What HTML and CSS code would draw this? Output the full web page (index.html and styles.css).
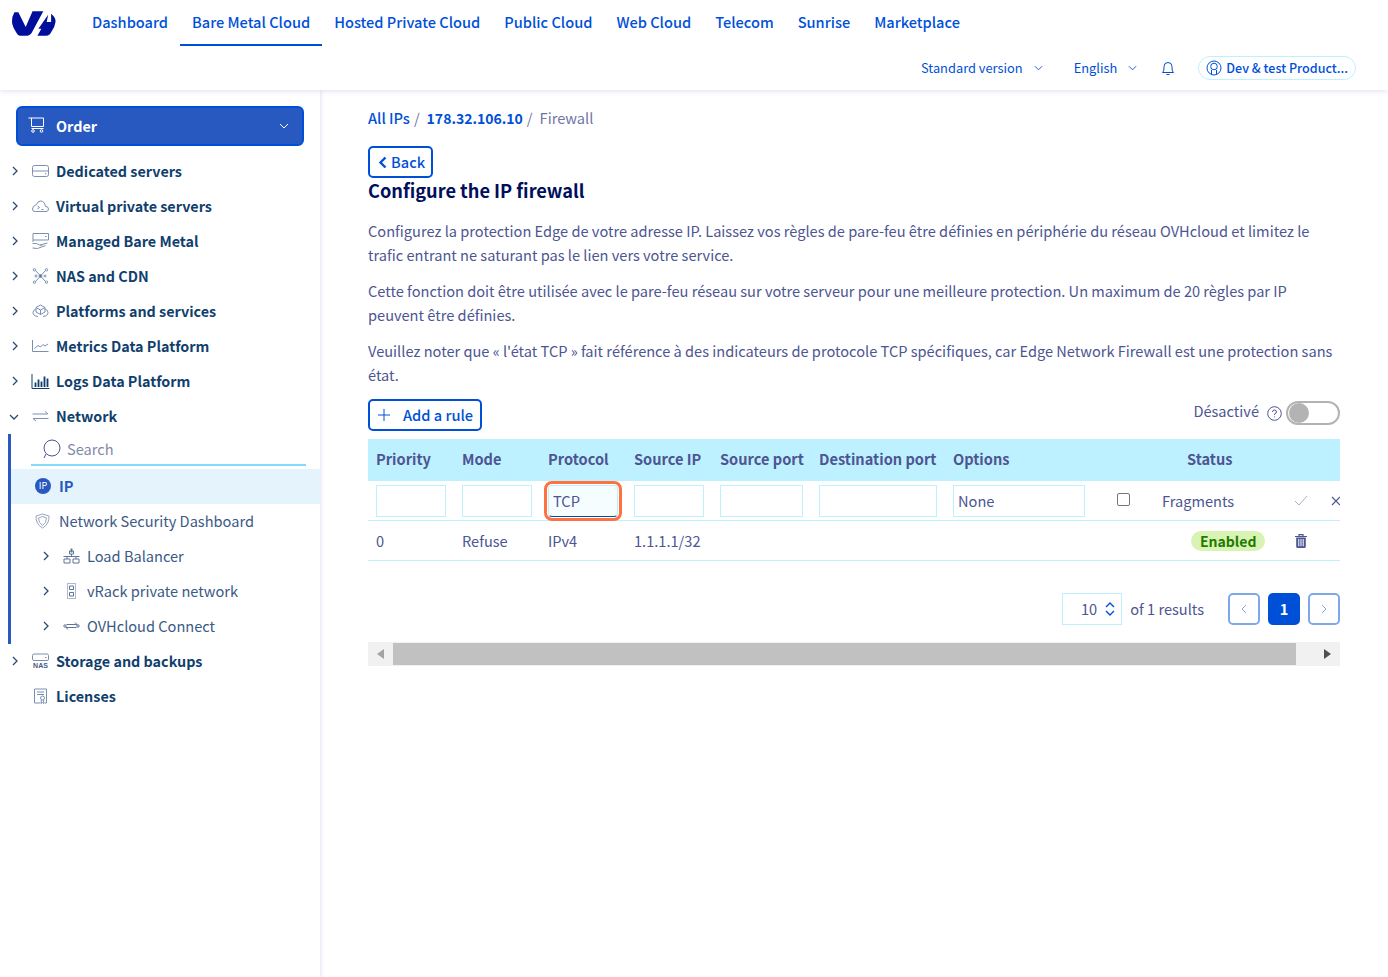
FILE: index.html
```html
<!DOCTYPE html>
<html lang="en">
<head>
  <meta charset="UTF-8" />
  <title>Configure the IP firewall</title>
  <link rel="stylesheet" href="styles.css">
</head>
<body>
  <header class="topbar">
    <div class="topbar-row">
      <svg class="logo" viewBox="0 0 45 26" width="44" height="26">
        <path d="M2.5 2H6.5L14 17L21 1H32L21 21.5Q19 26 15 26H8Q6 26 4.5 23Q0 16 0 11.5Q0 6 2.5 2Z"/>
        <path d="M40 3.500Q45 7.500 44.500 12Q44 17 40 22.500Q38.500 26 35 26H26L30 19H27L37 4.500L35.500 12H40Z"/>
      </svg>
      <nav class="main-nav">
        <a href="#">Dashboard</a>
        <a href="#" class="active">Bare Metal Cloud</a>
        <a href="#">Hosted Private Cloud</a>
        <a href="#">Public Cloud</a>
        <a href="#">Web Cloud</a>
        <a href="#">Telecom</a>
        <a href="#">Sunrise</a>
        <a href="#">Marketplace</a>
      </nav>
    </div>
    <div class="topbar-tools">
      <a href="#" class="tool version">Standard version <svg class="chev-small" viewBox="0 0 10 6"><path d="M1 1l4 4 4-4"/></svg></a>
      <a href="#" class="tool lang">English <svg class="chev-small" viewBox="0 0 10 6"><path d="M1 1l4 4 4-4"/></svg></a>
      <svg class="bell" viewBox="0 0 14 15"><path d="M1.5 11.500Q3 10.500 3 7V5.500a4 4 0 0 1 8 0V7q0 3.500 1.500 4.500ZM5.500 13.500h3"/></svg>
      <a href="#" class="user-pill">
        <svg class="user-icon" viewBox="0 0 16 16"><circle cx="8" cy="8" r="7"/><circle cx="8" cy="6.500" r="3.300"/><path d="M5.500 14.500V10M10.500 14.500V10"/></svg>
        Dev &amp; test Product...
      </a>
    </div>
  </header>

  <div class="layout">
    <aside class="sidebar">
      <button class="order-btn">
        <svg class="cart" viewBox="0 0 17 16"><path d="M.5 1H15.500V9.500H3.500V1M3.500 11.500H15.500"/><circle cx="5" cy="14" r="1.300"/><circle cx="13.500" cy="14" r="1.300"/></svg>
        <span>Order</span>
        <svg class="chev-order" viewBox="0 0 10 6"><path d="M1 1l4 4 4-4"/></svg>
      </button>

      <ul class="side-list">
        <li class="side-item">
          <svg class="caret" viewBox="0 0 6 10"><path d="M1 1l4 4-4 4"/></svg>
          <svg class="side-icon" viewBox="0 0 17 12"><rect x=".5" y=".5" width="16" height="11" rx="2"/><path d="M.5 6h16M13 8.800h1.500"/></svg>
          Dedicated servers
        </li>
        <li class="side-item">
          <svg class="caret" viewBox="0 0 6 10"><path d="M1 1l4 4-4 4"/></svg>
          <svg class="side-icon" viewBox="0 0 17 12"><path d="M3.500 11.500H14Q16.500 11.500 16.500 9T13.500 6.500Q12.500 1 8.500 1 5.500 1 4.500 4.500 .5 6 .5 9t3 2.500ZM5.500 6l2 1.500-2 1.500M9.500 9.500h2"/></svg>
          Virtual private servers
        </li>
        <li class="side-item">
          <svg class="caret" viewBox="0 0 6 10"><path d="M1 1l4 4-4 4"/></svg>
          <svg class="side-icon tall" viewBox="0 0 17 16"><path d="M1 9V.5H16.500V7H1M13 3.500h1.500M.5 10.500h4l3 1.500h3M.5 15l5 .5 8-3M8 12l7.500-2"/></svg>
          Managed Bare Metal
        </li>
        <li class="side-item">
          <svg class="caret" viewBox="0 0 6 10"><path d="M1 1l4 4-4 4"/></svg>
          <svg class="side-icon tall" viewBox="0 0 16 16"><path d="M3 2.500L13 13.500M13 2.500L3 13.500"/><circle cx="2" cy="1.800" r="1.200"/><circle cx="14" cy="1.800" r="1.200"/><circle cx="2" cy="14.200" r="1.200"/><circle cx="14" cy="14.200" r="1.200"/><circle cx="3.500" cy="8" r="1"/><circle cx="12.500" cy="8" r="1"/><circle class="node" cx="8" cy="8" r="1.400"/></svg>
          NAS and CDN
        </li>
        <li class="side-item">
          <svg class="caret" viewBox="0 0 6 10"><path d="M1 1l4 4-4 4"/></svg>
          <svg class="side-icon tall" viewBox="0 0 17 14"><path d="M8.500 1L13 3.500V8L8.500 10.500 4 8V3.500ZM4 3.500l4.500 2.500L13 3.500M8.500 6v4.500"/><path d="M4 5Q1 6 1 8.500 1 12 6 12.500M13 5q3 1 3 3.500 0 3.500-5 4"/></svg>
          Platforms and services
        </li>
        <li class="side-item">
          <svg class="caret" viewBox="0 0 6 10"><path d="M1 1l4 4-4 4"/></svg>
          <svg class="side-icon" viewBox="0 0 17 12"><path d="M.5 0V11.500H16.500M2.500 8.500L6 5.500 8.500 7 11 4.500 13 6 16 4"/></svg>
          Metrics Data Platform
        </li>
        <li class="side-item">
          <svg class="caret" viewBox="0 0 6 10"><path d="M1 1l4 4-4 4"/></svg>
          <svg class="side-icon logs" viewBox="0 0 18 15"><path d="M.5 0V14.500H18"/><path class="bars" d="M4 13V8.500M7 13V5.500M10 13V7.500M13 13V2.500M16 13V4.500"/></svg>
          Logs Data Platform
        </li>
        <li class="side-item">
          <svg class="caret open" viewBox="0 0 10 6"><path d="M1 1l4 4 4-4"/></svg>
          <svg class="side-icon" viewBox="0 0 17 11"><path d="M.5 3.500h15M13 1l3 2.500M16.500 8H1M4 10.500L1 8"/></svg>
          Network
        </li>
        <li>
          <ul class="sub-list">
            <li class="sub-search">
              <svg class="search-icon" viewBox="0 0 19 20"><circle cx="10" cy="9" r="8"/><path d="M4 15l-2 4"/></svg>
              <span>Search</span>
            </li>
            <li class="sub-item current">
              <span class="ip-badge"><span>IP</span></span>
              IP
            </li>
            <li class="sub-item">
              <svg class="shield" viewBox="0 0 15 16"><path d="M7.500 1L14 3Q14.500 11 7.500 15 .5 11 1 3Z"/><path d="M7.500 3.500L11.500 5Q11.500 10 7.500 12.500 3.500 10 3.500 5Z"/></svg>
              Network Security Dashboard
            </li>
            <li class="sub-item nested">
              <svg class="caret" viewBox="0 0 6 10"><path d="M1 1l4 4-4 4"/></svg>
              <svg class="side-icon tall" viewBox="0 0 17 15"><path class="bars" d="M8.500 0v4"/><path d="M6.500 2.500h4v3h-4ZM.5 8h16M8.500 5.500V8M1 10.500h6V14.500H1ZM10 10.500h6V14.500h-6ZM4 8V10.500M13 8V10.500"/></svg>
              Load Balancer
            </li>
            <li class="sub-item nested">
              <svg class="caret" viewBox="0 0 6 10"><path d="M1 1l4 4-4 4"/></svg>
              <svg class="side-icon tall rack" viewBox="0 0 17 16"><path class="dots" d="M4.500 .5h8v15h-8Z"/><path d="M6.500 3h4v3.500h-4ZM6.500 9.500h4V13h-4Z"/></svg>
              vRack private network
            </li>
            <li class="sub-item nested">
              <svg class="caret" viewBox="0 0 6 10"><path d="M1 1l4 4-4 4"/></svg>
              <svg class="side-icon" viewBox="0 0 17 11"><path d="M3.500 4H14M12 2l2 2M13.500 7H3M5 9L3 7"/><circle cx="2" cy="5.500" r="1.200"/><circle cx="15" cy="5.500" r="1.200"/></svg>
              OVHcloud Connect
            </li>
          </ul>
        </li>
        <li class="side-item">
          <svg class="caret" viewBox="0 0 6 10"><path d="M1 1l4 4-4 4"/></svg>
          <svg class="side-icon nas" viewBox="0 0 17 16"><path d="M2 1H15Q16.500 1 16.500 2.500V6Q16.500 7.500 15 7.500H2Q.5 7.500 .5 6V2.500Q.5 1 2 1ZM13 4.500h1.500"/><text x="8.500" y="15" text-anchor="middle">NAS</text></svg>
          Storage and backups
        </li>
        <li class="side-item">
          <svg class="side-icon tall" viewBox="0 0 14 16"><path d="M7 15H1V1H13V15H11M3.500 4h7M3.500 6.500h7"/><circle cx="9" cy="10" r="2"/><path d="M7.800 12v3.500L9 14.500l1.200 1V12"/></svg>
          Licenses
        </li>
      </ul>
    </aside>

    <main class="content">
      <div class="breadcrumb">
        <a href="#">All IPs</a><span class="sep">/</span>
        <a href="#" class="ip-link">178.32.106.10</a><span class="sep">/</span>
        <span class="here">Firewall</span>
      </div>

      <a href="#" class="back-btn">
        <svg viewBox="0 0 9 13"><path d="M7.500 1.500L2.500 6.500l5 5"/></svg>
        Back
      </a>
      <h1>Configure the IP firewall</h1>

      <p>Configurez la protection Edge de votre adresse IP. Laissez vos règles de pare-feu être définies en périphérie du réseau OVHcloud et limitez le trafic entrant ne saturant pas le lien vers votre service.</p>
      <p>Cette fonction doit être utilisée avec le pare-feu réseau sur votre serveur pour une meilleure protection. Un maximum de 20 règles par IP peuvent être définies.</p>
      <p>Veuillez noter que « l'état TCP » fait référence à des indicateurs de protocole TCP spécifiques, car Edge Network Firewall est une protection sans état.</p>

      <div class="rule-bar">
        <a href="#" class="add-btn">
          <svg viewBox="0 0 12 12"><path d="M6 0v12M0 6h12"/></svg>
          Add a rule
        </a>
        <div class="mitigation">
          <span class="mitigation-label">Désactivé</span>
          <svg class="help" viewBox="0 0 15 15"><circle cx="7.500" cy="7.500" r="6.800"/><path d="M5.500 6Q5.500 4 7.500 4T9.500 6Q9.500 7 7.500 8V9M7.500 10.500v.8"/></svg>
          <span class="toggle"><span class="knob"></span></span>
        </div>
      </div>

      <div class="table-wrap">
        <table class="rules">
          <colgroup>
            <col class="c86"><col class="c86"><col class="c86"><col class="c86"><col class="c99"><col class="c134"><col class="c148"><col class="c61"><col class="c25"><col class="c104"><col class="c40"><col class="c40">
          </colgroup>
          <thead>
            <tr>
              <th>Priority</th><th>Mode</th><th>Protocol</th><th>Source IP</th><th>Source port</th><th>Destination port</th><th>Options</th><th></th><th></th><th>Status</th><th></th><th></th>
            </tr>
          </thead>
          <tbody>
            <tr class="filter-row">
              <td><input class="w70" type="text"></td>
              <td><input class="w70" type="text"></td>
              <td><input class="w70 focused" type="text" value="TCP"></td>
              <td><input class="w70" type="text"></td>
              <td><input class="w83" type="text"></td>
              <td><input class="w118" type="text"></td>
              <td><input class="w132" type="text" placeholder="None"></td>
              <td><span class="checkbox"></span></td>
              <td colspan="2">Fragments</td>
              <td class="action"><svg class="ok" viewBox="0 0 14 11"><path d="M1 6l4 4 8-9"/></svg></td>
              <td class="action"><svg class="cancel" viewBox="0 0 10 10"><path d="M1 1l8 8M9 1l-8 8"/></svg></td>
            </tr>
            <tr>
              <td>0</td><td>Refuse</td><td>IPv4</td><td>1.1.1.1/32</td><td></td><td></td><td></td><td></td><td></td>
              <td class="status-cell"><span class="badge">Enabled</span></td>
              <td class="action"><svg class="trash" viewBox="0 0 12 14"><path class="lid" d="M0 2.500h12M4 2.500V.7h4v1.800"/><path class="can" fill-rule="evenodd" d="M1.200 3.500h9.600V12.500Q10.800 14 9.300 14H2.700Q1.200 14 1.200 12.500ZM3.300 5V12.300H4.300V5ZM5.500 5V12.300H6.500V5ZM7.700 5V12.300H8.700V5Z"/></svg></td>
              <td></td>
            </tr>
          </tbody>
        </table>
      </div>

      <div class="pager">
        <div class="page-size">
          <span>10</span>
          <svg viewBox="0 0 10 14"><path d="M1 5l4-4 4 4M1 9l4 4 4-4"/></svg>
        </div>
        <span class="results">of 1 results</span>
        <a href="#" class="page-btn arrow"><svg viewBox="0 0 6 10"><path d="M5 1L1 5l4 4"/></svg></a>
        <a href="#" class="page-btn now">1</a>
        <a href="#" class="page-btn arrow"><svg viewBox="0 0 6 10"><path d="M1 1l4 4-4 4"/></svg></a>
      </div>

      <div class="scrollbar">
        <span class="arrow-left"></span>
        <span class="thumb"></span>
        <span class="arrow-right"></span>
      </div>
    </main>
  </div>
</body>
</html>
```

FILE: styles.css
```css
* {
  box-sizing: border-box;
}

body {
  margin: 0;
  height: 977px;
  overflow: hidden;
  font-family: "Noto Sans CJK SC", "Noto Sans", sans-serif;
  font-size: 14.6px;
  line-height: 24px;
  color: #4d5592;
  background: #fff;
}

a {
  color: #0050d7;
  text-decoration: none;
}

svg {
  fill: none;
  stroke: currentColor;
  stroke-width: 1;
  flex: none;
}

ul {
  list-style: none;
  margin: 0;
  padding: 0;
}

.topbar {
  height: 90px;
  background: #fff;
  box-shadow: 0 1px 5px rgba(180, 185, 235, 0.45);
  position: relative;
  z-index: 2;
}

.topbar-row {
  display: flex;
  height: 46px;
  padding-left: 12px;
}

.logo {
  margin-top: 10px;
  fill: #000e9c;
  stroke: none;
}

.main-nav {
  display: flex;
  margin-left: 24px;
}

.main-nav a {
  padding: 10px 12px 0;
  font-weight: 500;
  border-bottom: 2px solid transparent;
}

.main-nav a.active {
  border-bottom-color: #0050d7;
}

.topbar-tools {
  display: flex;
  align-items: center;
  justify-content: flex-end;
  height: 24px;
  margin-top: 10px;
  padding-right: 32px;
  font-size: 12.85px;
}

.tool {
  display: flex;
  align-items: center;
}

.version {
  margin-right: 31px;
}

.lang {
  margin-right: 24px;
}

.chev-small {
  width: 9px;
  height: 6px;
  margin-left: 11px;
}

.bell {
  width: 14px;
  height: 15px;
  color: #0050d7;
  margin-right: 23px;
}

.user-pill {
  display: flex;
  align-items: center;
  gap: 4px;
  height: 24px;
  padding: 0 7px;
  border: 1px solid #bef1ff;
  border-radius: 12px;
  font-size: 12.55px;
  font-weight: 500;
}

.user-icon {
  width: 16px;
  height: 16px;
}

.layout {
  display: flex;
  height: 887px;
}

.sidebar {
  width: 320px;
  flex: none;
  padding-top: 16px;
  box-shadow: 1px 0 3px rgba(180, 185, 235, 0.4);
}

.order-btn {
  display: flex;
  align-items: center;
  width: 288px;
  height: 40px;
  margin: 0 0 7.5px 16px;
  padding: 0 13px 0 10px;
  border: 2px solid #0050d7;
  border-radius: 6px;
  background: #2859c0;
  color: #fff;
  font: 700 14.4px/24px "Noto Sans CJK SC", "Noto Sans", sans-serif;
}

.order-btn span {
  flex: 1;
  text-align: left;
  margin-left: 11px;
}

.cart {
  width: 17px;
  height: 16px;
  margin-top: -2px;
}

.chev-order {
  width: 10px;
  height: 6px;
}

.side-item {
  display: flex;
  align-items: center;
  height: 35px;
  padding-left: 32px;
  position: relative;
  color: #113f6d;
  font-size: 14.35px;
  font-weight: 700;
}

.caret {
  position: absolute;
  left: 12px;
  top: 12px;
  width: 6px;
  height: 10px;
  color: #2b4a75;
  stroke-width: 1.3;
}

.caret.open {
  left: 9px;
  top: 15px;
  width: 10px;
  height: 6px;
}

.side-icon {
  width: 17px;
  height: 12px;
  margin-right: 7px;
  color: #7b8fb0;
}

.side-icon.tall {
  height: 16px;
}

.side-icon .node {
  fill: #5f7599;
}

.side-icon.logs {
  width: 19px;
  height: 15px;
  margin-left: -1px;
  margin-right: 6px;
  color: #113f6d;
}

.bars {
  stroke-width: 1.8;
}

.side-icon.rack .dots {
  stroke-dasharray: 1 1;
}

.side-icon.nas {
  height: 16px;
}

.nas text {
  font: 700 7px "Liberation Sans", sans-serif;
  fill: #445b82;
  stroke: none;
}

.sub-list {
  margin-left: 8px;
  border-left: 3px solid #2859c0;
}

.sub-search {
  display: flex;
  align-items: center;
  height: 35px;
  margin: 0 14px 0 20px;
  padding: 0 0 4px 11px;
  color: #838aa8;
  position: relative;
}

.sub-search::after {
  content: "";
  position: absolute;
  left: 0;
  right: 0;
  bottom: 3px;
  height: 2px;
  background: #85d9fa;
}

.search-icon {
  width: 19px;
  height: 20px;
  margin-right: 6px;
  color: #4d5592;
}

.sub-item {
  display: flex;
  align-items: center;
  height: 35px;
  padding-left: 24px;
  color: #3b5a85;
  position: relative;
}

.sub-item.current {
  background: #e5f4fc;
  color: #2859c0;
  font-weight: 700;
}

.ip-badge {
  display: flex;
  align-items: center;
  justify-content: center;
  width: 16px;
  height: 16px;
  margin-right: 8px;
  border-radius: 50%;
  background: #2859c0;
  color: #fff;
  font-size: 9px;
  line-height: 16px;
  font-weight: 400;
}

.shield {
  width: 15px;
  height: 16px;
  margin-right: 9px;
  color: #9aa5c0;
}

.sub-item.nested {
  padding-left: 52px;
}

.sub-item.nested .caret {
  left: 32px;
}

.sub-item.nested .side-icon {
  margin-right: 7px;
  color: #5f7599;
}

.content {
  flex: 1;
  padding: 16px 48px 0;
  min-width: 0;
}

.breadcrumb {
  display: flex;
  align-items: center;
  height: 24px;
  font-weight: 500;
}

.breadcrumb .ip-link {
  font-size: 14px;
  font-weight: 700;
}

.sep {
  margin: 0 7px 0 4px;
  font-weight: 400;
  color: #6f76a6;
}

.here {
  font-weight: 400;
  color: #6f76a6;
}

.back-btn {
  display: inline-flex;
  align-items: center;
  gap: 4px;
  height: 32px;
  margin-top: 16px;
  padding: 0 6px 0 8px;
  border: 2px solid #0050d7;
  border-radius: 5px;
  font-weight: 500;
}

.back-btn svg {
  width: 9px;
  height: 13px;
  stroke-width: 2.4;
}

h1 {
  margin: 0 0 17px;
  font-size: 18.2px;
  line-height: 24px;
  font-weight: 700;
  color: #000e5c;
}

p {
  margin: 0 0 12px;
}

.rule-bar {
  display: flex;
  justify-content: space-between;
  align-items: center;
  height: 32px;
  margin-bottom: 8px;
}

.add-btn {
  display: flex;
  align-items: center;
  gap: 13px;
  height: 32px;
  padding: 0 7px 0 8px;
  border: 2px solid #0050d7;
  border-radius: 5px;
  font-weight: 500;
}

.add-btn svg {
  width: 12px;
  height: 12px;
}

.mitigation {
  display: flex;
  align-items: center;
  margin-bottom: 4px;
}

.mitigation-label {
  margin-top: -4px;
}

.help {
  width: 15px;
  height: 15px;
  margin: 0 4px 0 8px;
}

.toggle {
  display: block;
  width: 54px;
  height: 24px;
  padding: 0 1px;
  border: 2px solid #b3b3b3;
  border-radius: 12px;
}

.knob {
  display: block;
  width: 20px;
  height: 20px;
  border-radius: 50%;
  background: #b3b3b3;
}

.table-wrap {
  overflow: hidden;
  width: 972px;
}

.rules {
  table-layout: fixed;
  width: 995px;
  border-collapse: separate;
  border-spacing: 0;
}

.c86 { width: 86px; }
.c99 { width: 99px; }
.c134 { width: 134px; }
.c148 { width: 148px; }
.c61 { width: 61px; }
.c25 { width: 25px; }
.c104 { width: 104px; }
.c40 { width: 40px; }

.rules th {
  height: 42px;
  padding: 0 8px 2px;
  background: #bef1ff;
  text-align: left;
  font-weight: 600;
  white-space: nowrap;
}

.rules td {
  height: 40px;
  padding: 0 8px;
  border-bottom: 1px solid #bef1ff;
  white-space: nowrap;
}

.rules input {
  display: block;
  height: 32px;
  padding: 0 4px;
  border: 1px solid #bef1ff;
  background: #fff;
  color: #4d5592;
  font: 14.6px/24px "Noto Sans CJK SC", "Noto Sans", sans-serif;
}

.rules input::placeholder {
  color: #4d5592;
  opacity: 1;
}

.w70 { width: 70px; }
.w83 { width: 83px; }
.w118 { width: 118px; }
.w132 { width: 132px; }

.rules input.focused {
  background: #f5fdff;
  border-bottom-color: #0050a0;
  border-radius: 4px;
  outline: 3px solid #ff7140;
  outline-offset: 1px;
}

.checkbox {
  display: block;
  width: 13px;
  height: 13px;
  margin: -2px 0 0 16px;
  border: 1px solid #767676;
  border-radius: 2px;
}

.action svg {
  display: block;
}

.ok {
  width: 14px;
  height: 11px;
  margin-left: 3px;
  color: #a9b0cc;
}

.cancel {
  width: 10px;
  height: 10px;
  stroke-width: 1.2;
}

.trash {
  width: 12px;
  height: 14px;
  margin-left: 4px;
  color: #4d5592;
}

.trash .lid {
  stroke-width: 1.2;
}

.trash .can {
  fill: currentColor;
  stroke: none;
}

.rules .status-cell {
  padding-left: 12px;
}

.badge {
  display: inline-block;
  height: 20px;
  padding: 0 9px;
  border-radius: 10px;
  background: #d9f3b5;
  color: #1f7a00;
  font-size: 14px;
  font-weight: 600;
  line-height: 20px;
}

.pager {
  display: flex;
  align-items: center;
  justify-content: flex-end;
  margin-top: 32px;
}

.page-size {
  display: flex;
  align-items: center;
  justify-content: flex-end;
  gap: 8px;
  width: 60px;
  height: 32px;
  padding-right: 6px;
  border: 1px solid #bef1ff;
}

.page-size svg {
  width: 10px;
  height: 14px;
  color: #0050d7;
  stroke-width: 1.4;
}

.results {
  margin: 0 24px 0 8px;
}

.page-btn {
  display: flex;
  align-items: center;
  justify-content: center;
  width: 32px;
  height: 32px;
  margin-right: 8px;
  border-radius: 5px;
}

.page-btn:last-child {
  margin-right: 0;
}

.page-btn.arrow {
  border: 2px solid #7fa7eb;
  color: #7fa7eb;
}

.page-btn.arrow svg {
  width: 6px;
  height: 10px;
}

.page-btn.now {
  background: #0050d7;
  color: #fff;
  font-weight: 700;
}

.scrollbar {
  display: flex;
  align-items: center;
  height: 24px;
  margin-top: 17px;
  background: #f1f1f1;
}

.arrow-left {
  width: 0;
  height: 0;
  margin: 0 9px;
  border: 5px solid transparent;
  border-left: 0;
  border-right: 7px solid #a3a3a3;
}

.thumb {
  flex: 1;
  height: 22px;
  background: #c1c1c1;
}

.arrow-right {
  width: 0;
  height: 0;
  margin: 0 9px 0 28px;
  border: 5px solid transparent;
  border-right: 0;
  border-left: 7px solid #505050;
}
```
